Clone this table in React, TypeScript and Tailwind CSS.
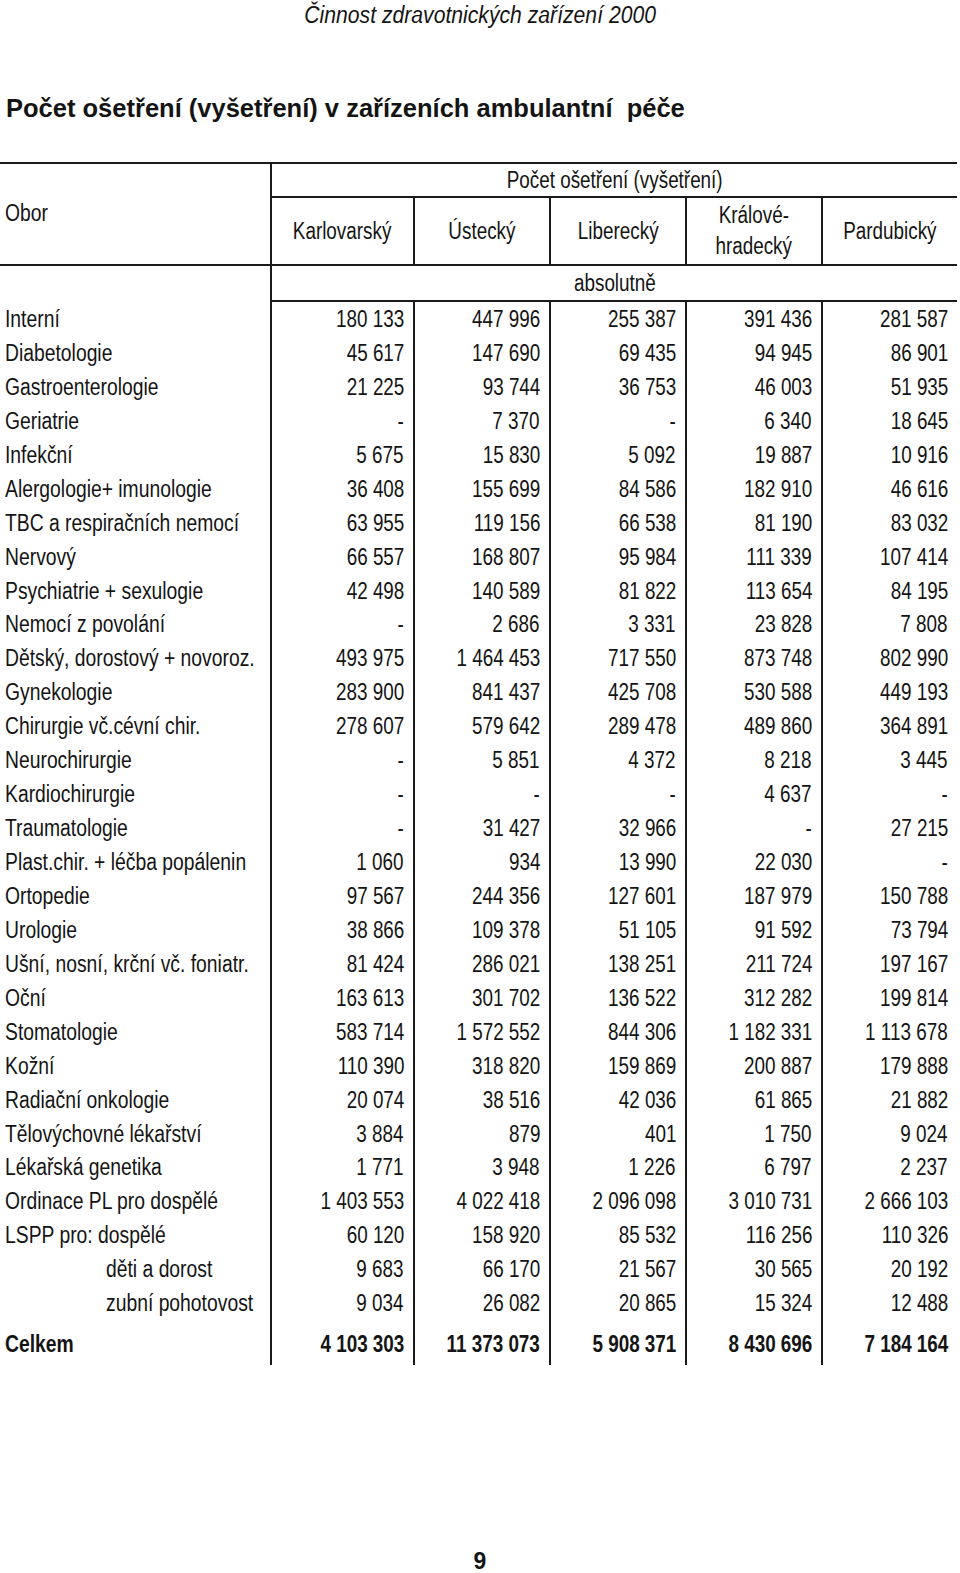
const rows: [string, string[], boolean?][] = [
  ["Interní", ["180 133", "447 996", "255 387", "391 436", "281 587"]],
  ["Diabetologie", ["45 617", "147 690", "69 435", "94 945", "86 901"]],
  ["Gastroenterologie", ["21 225", "93 744", "36 753", "46 003", "51 935"]],
  ["Geriatrie", ["-", "7 370", "-", "6 340", "18 645"]],
  ["Infekční", ["5 675", "15 830", "5 092", "19 887", "10 916"]],
  ["Alergologie+ imunologie", ["36 408", "155 699", "84 586", "182 910", "46 616"]],
  ["TBC a respiračních nemocí", ["63 955", "119 156", "66 538", "81 190", "83 032"]],
  ["Nervový", ["66 557", "168 807", "95 984", "111 339", "107 414"]],
  ["Psychiatrie + sexulogie", ["42 498", "140 589", "81 822", "113 654", "84 195"]],
  ["Nemocí z povolání", ["-", "2 686", "3 331", "23 828", "7 808"]],
  ["Dětský, dorostový + novoroz.", ["493 975", "1 464 453", "717 550", "873 748", "802 990"]],
  ["Gynekologie", ["283 900", "841 437", "425 708", "530 588", "449 193"]],
  ["Chirurgie vč.cévní chir.", ["278 607", "579 642", "289 478", "489 860", "364 891"]],
  ["Neurochirurgie", ["-", "5 851", "4 372", "8 218", "3 445"]],
  ["Kardiochirurgie", ["-", "-", "-", "4 637", "-"]],
  ["Traumatologie", ["-", "31 427", "32 966", "-", "27 215"]],
  ["Plast.chir. + léčba popálenin", ["1 060", "934", "13 990", "22 030", "-"]],
  ["Ortopedie", ["97 567", "244 356", "127 601", "187 979", "150 788"]],
  ["Urologie", ["38 866", "109 378", "51 105", "91 592", "73 794"]],
  ["Ušní, nosní, krční vč. foniatr.", ["81 424", "286 021", "138 251", "211 724", "197 167"]],
  ["Oční", ["163 613", "301 702", "136 522", "312 282", "199 814"]],
  ["Stomatologie", ["583 714", "1 572 552", "844 306", "1 182 331", "1 113 678"]],
  ["Kožní", ["110 390", "318 820", "159 869", "200 887", "179 888"]],
  ["Radiační onkologie", ["20 074", "38 516", "42 036", "61 865", "21 882"]],
  ["Tělovýchovné lékařství", ["3 884", "879", "401", "1 750", "9 024"]],
  ["Lékařská genetika", ["1 771", "3 948", "1 226", "6 797", "2 237"]],
  ["Ordinace PL pro dospělé", ["1 403 553", "4 022 418", "2 096 098", "3 010 731", "2 666 103"]],
  ["LSPP pro: dospělé", ["60 120", "158 920", "85 532", "116 256", "110 326"]],
  ["děti a dorost", ["9 683", "66 170", "21 567", "30 565", "20 192"], true],
  ["zubní pohotovost", ["9 034", "26 082", "20 865", "15 324", "12 488"], true],
];

const total = ["4 103 303", "11 373 073", "5 908 371", "8 430 696", "7 184 164"];

const font = { fontFamily: "'Liberation Sans', Arial, sans-serif" };

// no narrow face installed, so squeeze the glyphs horizontally
function L({ children }: { children: React.ReactNode }) {
  return <span className="inline-block whitespace-nowrap scale-x-[0.84] origin-left">{children}</span>;
}
function R({ children }: { children: React.ReactNode }) {
  return <span className="inline-block whitespace-nowrap scale-x-[0.82] origin-right">{children}</span>;
}
function C({ children }: { children: React.ReactNode }) {
  return <span className="inline-block whitespace-nowrap scale-x-[0.82] origin-center">{children}</span>;
}

const line = "border-[#1a1a1a]";

export default function App() {
  return (
    <div className="w-[960px] h-[1573px] bg-white text-[#141414] flex flex-col" style={font}>
      <div className="h-[29px] flex items-center justify-center text-[23px] italic pt-[2px]">
        <span className="inline-block whitespace-nowrap scale-x-[0.92] origin-center">Činnost zdravotnických zařízení 2000</span>
      </div>

      <h1 className="mt-[64px] h-[30px] pl-[6px] text-[25.5px] font-bold flex items-center whitespace-nowrap">
        Počet ošetření (vyšetření) v zařízeních ambulantní&nbsp; péče
      </h1>

      <div className="mt-[39px] w-[957px] text-[23px]">
        {/* header */}
        <div className={`flex border-t-2 border-b-2 ${line} h-[104px]`}>
          <div className="w-[270px] flex items-center pl-[5px] pb-[2px]"><L>Obor</L></div>
          <div className={`flex-1 flex flex-col border-l-2 ${line}`}>
            <div className={`h-[34px] flex items-center justify-center border-b-2 ${line}`}>
              <C>Počet ošetření (vyšetření)</C>
            </div>
            <div className="flex-1 grid grid-cols-[141px_136px_136px_136px_1fr]">
              <div className="flex items-center justify-center"><C>Karlovarský</C></div>
              <div className={`flex items-center justify-center border-l-2 ${line}`}><C>Ústecký</C></div>
              <div className={`flex items-center justify-center border-l-2 ${line}`}><C>Liberecký</C></div>
              <div className={`flex flex-col items-center justify-center leading-[31px] border-l-2 ${line}`}>
                <C>Králové-</C>
                <C>hradecký</C>
              </div>
              <div className={`flex items-center justify-center border-l-2 ${line}`}><C>Pardubický</C></div>
            </div>
          </div>
        </div>

        <div className="flex h-[36px]">
          <div className="w-[270px]" />
          <div className={`flex-1 flex items-center justify-center border-l-2 border-b-2 ${line}`}><C>absolutně</C></div>
        </div>

        {/* body */}
        {rows.map(([label, vals, indent]) => (
          <div key={label} className="grid grid-cols-[270px_143px_136px_136px_136px_1fr] h-[33.95px]">
            <div className={`flex items-center ${indent ? "pl-[106px]" : "pl-[5px]"}`}><L>{label}</L></div>
            {vals.map((v, i) => (
              <div key={i} className={`flex items-center justify-end pr-[9px] border-l-2 ${line}`}>
                <R>{v}</R>
              </div>
            ))}
          </div>
        ))}

        <div className="grid grid-cols-[270px_143px_136px_136px_136px_1fr] h-[45px] font-bold">
          <div className="flex items-center pl-[5px] pt-[3px]"><L>Celkem</L></div>
          {total.map((v, i) => (
            <div key={i} className={`flex items-center justify-end pr-[9px] pt-[3px] border-l-2 ${line}`}>
              <R>{v}</R>
            </div>
          ))}
        </div>
      </div>

      <div className="mt-auto mb-[2px] h-[20px] flex items-center justify-center text-[23px] font-bold">9</div>
    </div>
  );
}
